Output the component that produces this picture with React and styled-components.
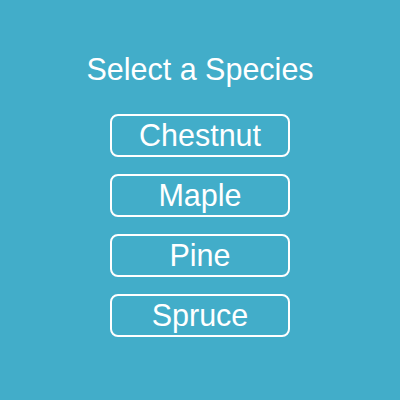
import styled, { createGlobalStyle } from 'styled-components'

const GlobalStyle = createGlobalStyle`
  html, body {
    margin: 0;
    padding: 0;
    background: #42adc9;
  }
  body {
    font-family: "Liberation Sans", Arial, sans-serif;
  }
`;

const Page = styled.div`
  width: 400px;
  height: 400px;
  background: #42adc9;
  display: flex;
  flex-direction: column;
  align-items: center;
  padding-top: 51px;
  box-sizing: border-box;
  color: #fff;
`;

const Title = styled.h1`
  margin: 0 0 27px;
  font-size: 30.5px;
  font-weight: normal;
  line-height: 36px;
`;

const List = styled.div`
  display: flex;
  flex-direction: column;
  gap: 17px;
`;

const SpeciesButton = styled.button`
  width: 180px;
  height: 43px;
  box-sizing: border-box;
  border: 2px solid #fff;
  border-radius: 8px;
  background: transparent;
  color: #fff;
  font-family: "Liberation Sans", Arial, sans-serif;
  font-size: 30.5px;
  line-height: 1;
  padding: 0;
  cursor: pointer;
`;

const species = ['Chestnut', 'Maple', 'Pine', 'Spruce']

const App = () => {
  return (
    <>
      <GlobalStyle />
      <Page>
        <Title>Select a Species</Title>
        <List>
          {species.map((s) => (
            <SpeciesButton key={s}>{s}</SpeciesButton>
          ))}
        </List>
      </Page>
    </>
  )
}

export default App
